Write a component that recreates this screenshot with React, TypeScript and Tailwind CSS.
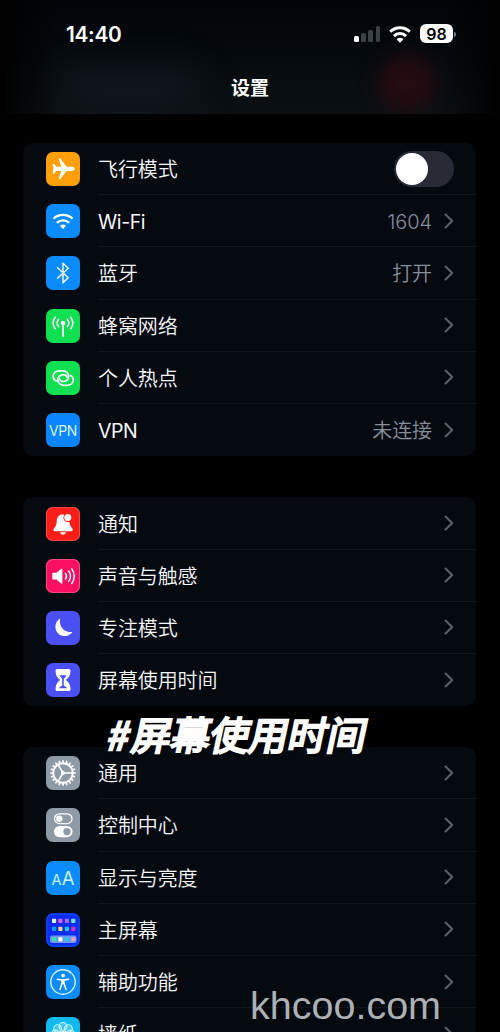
import type { ReactNode } from "react";

type Item = {
  label: string;
  icon: ReactNode;
  tile: string;
  value?: string;
  toggle?: boolean;
  latin?: boolean;
};

const gearTeeth = Array.from({ length: 20 }, (_, i) => i * 18);

function Glyph({ children }: { children: ReactNode }) {
  return (
    <svg viewBox="0 0 34 34" className="size-[34px]" fill="none" stroke="none" strokeLinecap="round" strokeLinejoin="round">
      {children}
    </svg>
  );
}

const plane = (
  <Glyph>
    <path
      d="M28.800 16.800c0-1.300-1.600-2.100-3.300-2.100h-4.800L14.700 7c-.4-.5-1-.6-2-.5l2.500 8.200h-4.800l-2.200-2.600H6.500l.9 4.700-.9 4.700h1.700l2.200-2.600h4.800l-2.500 8.200c1 .1 1.600 0 2-.5l6-7.700h4.800c1.700 0 3.300-.8 3.300-2.100z"
      fill="#fff"
    />
  </Glyph>
);

const wifi = (
  <Glyph>
    <g stroke="#fff" strokeWidth="2.2" strokeLinecap="butt">
      <path d="M7.400 14.800a13.800 13.800 0 0 1 19.200 0" />
      <path d="M10.900 18.700a8.900 8.900 0 0 1 12.200 0" />
    </g>
    <path d="M17 25l-3-3.200a4.500 4.500 0 0 1 6 0z" fill="#fff" />
  </Glyph>
);

const bluetooth = (
  <Glyph>
    <path d="M11.600 11.800l10.600 9.900-5.200 5V7.300l5.200 5-10.600 9.900" stroke="#fff" strokeWidth="1.4" />
  </Glyph>
);

const cellular = (
  <Glyph>
    <circle cx="17" cy="14" r="2.3" fill="#fff" />
    <path d="M17 15v12" stroke="#fff" strokeWidth="1.8" />
    <g stroke="#fff" strokeWidth="1.6">
      <path d="M12.600 10.400a5.700 5.700 0 0 0 0 7.200M21.400 10.400a5.700 5.700 0 0 1 0 7.200" />
      <path d="M9.200 8.300a9.600 9.600 0 0 0 0 11.400M24.800 8.300a9.600 9.600 0 0 1 0 11.400" />
    </g>
  </Glyph>
);

const hotspot = (
  <Glyph>
    <g stroke="#fff" strokeWidth="1.700">
      <path d="M10.200 19.900c-1.900-.9-3-2.500-3-4.500 0-3.100 2.500-5.500 5.800-5.500h3.800c3.300 0 5.900 2.400 5.900 5.400s-2.600 5.200-5.500 5.200c-1.900 0-3.300-1-3.700-2.500" />
      <path d="M24.300 14.300c1.900.9 3 2.500 3 4.500 0 3.100-2.500 5.500-5.800 5.500h-3.800c-3.300 0-5.900-2.400-5.900-5.400s2.600-5.200 5.500-5.200c1.900 0 3.300 1 3.700 2.500" />
    </g>
  </Glyph>
);

const bell = (
  <Glyph>
    <path
      d="M17.200 7.300c-4.300.2-6.300 2.900-6.500 6.600-.3 3.800-.7 5.200-2.500 7-1.300 1.300-.9 3.300.8 3.300h16.200c1.700 0 2.100-2 .8-3.300-1.500-1.500-2.100-2.800-2.400-5.400z"
      fill="#fff"
    />
    <path d="M14 25.300h6c-.4 1.600-1.600 2.500-3 2.500s-2.600-.9-3-2.500z" fill="#fff" />
    <circle cx="21.800" cy="10.600" r="4.400" fill="#fb1d18" />
    <circle cx="21.800" cy="10.600" r="3.500" fill="#fff" />
  </Glyph>
);

const speaker = (
  <Glyph>
    <path d="M6.300 15c0-.8.4-1.200 1.200-1.200h3l4.500-3.800c.7-.6 1.400-.3 1.400.6v13.200c0 .9-.7 1.200-1.400.6l-4.500-3.800h-3c-.8 0-1.200-.4-1.200-1.200z" fill="#fff" />
    <g stroke="#fff" strokeWidth="1.500">
      <path d="M19.500 14.400a4.700 4.700 0 0 1 0 5.600" />
      <path d="M22.600 12a8.700 8.700 0 0 1 0 10.400" />
      <path d="M25.800 9.900a12.500 12.500 0 0 1 0 14.600" />
    </g>
  </Glyph>
);

const moon = (
  <Glyph>
    <path d="M14.300 7.600a10.500 10.500 0 0 0 12.200 13.200 9.300 9.300 0 1 1-12.200-13.200z" fill="#fff" />
  </Glyph>
);

const hourglass = (
  <Glyph>
    <path
      d="M11.300 6h11.400c1.200 0 1.800.7 1.800 1.800 0 4.200-1.500 6.800-4.600 9.200 3.100 2.400 4.600 5 4.600 9.200 0 1.100-.6 1.800-1.800 1.800H11.300c-1.200 0-1.800-.7-1.800-1.800 0-4.200 1.500-6.800 4.600-9.200-3.100-2.400-4.600-5-4.600-9.200 0-1.100.6-1.800 1.800-1.800z"
      fill="#fff"
    />
    <path d="M13.300 12.300h7.400c-.7 1.300-1.700 2.400-2.900 3.400v7c1.600.5 2.700 1.300 3.300 2.500h-8.200c.6-1.200 1.700-2 3.300-2.500v-7c-1.200-1-2.200-2.100-2.900-3.400z" fill="#4b50f5" />
  </Glyph>
);

const gear = (
  <Glyph>
    <circle cx="17" cy="17" r="9.700" stroke="#fff" strokeWidth="1.900" />
    {gearTeeth.map((deg) => (
      <path key={deg} d="M17 6.400V4.900" stroke="#fff" strokeWidth="1.700" transform={`rotate(${deg} 17 17)`} />
    ))}
    <circle cx="17" cy="17" r="1.900" fill="#fff" />
    <path d="M17 17h9M17 17l-4.700-8M17 17l-4.700 8" stroke="#fff" strokeWidth="1.500" />
  </Glyph>
);

const switches = (
  <Glyph>
    <rect x="8.500" y="5.800" width="17.500" height="9.800" rx="4.900" stroke="#fff" strokeWidth="1.300" />
    <circle cx="13.300" cy="10.700" r="3.200" fill="#fff" />
    <rect x="7.900" y="18" width="18.700" height="11.200" rx="5.600" fill="#fff" />
    <circle cx="21" cy="23.600" r="3.700" fill="#8e9aa6" />
  </Glyph>
);

const homeDots = [
  { x: 6, y: 5.8, c: "#e3f4ff" },
  { x: 12.3, y: 5.8, c: "#e85ae0" },
  { x: 18.8, y: 5.8, c: "#a86cf2" },
  { x: 25.2, y: 5.8, c: "#6fe3c4" },
  { x: 6, y: 13.8, c: "#1797f5" },
  { x: 12.3, y: 13.8, c: "#e8d27c" },
  { x: 18.8, y: 13.8, c: "#2cc4ee" },
  { x: 25.2, y: 13.8, c: "#cf38b8" },
  { x: 6, y: 24.2, c: "#35e6a8" },
  { x: 12.3, y: 24.2, c: "#f2fbff" },
  { x: 18.8, y: 24.2, c: "#22c8f0" },
  { x: 25.2, y: 24.2, c: "#e8a1ac" },
];

const homeScreen = (
  <Glyph>
    <rect x="1" y="1" width="32" height="32" rx="6.500" stroke="#0a46ee" strokeWidth="1.500" />
    <rect x="4" y="22.500" width="26.500" height="7.400" rx="2" fill="#6f95f5" />
    {homeDots.map((dot) => (
      <rect key={`${dot.x}-${dot.y}`} x={dot.x} y={dot.y} width="4.200" height="4.200" rx=".8" fill={dot.c} />
    ))}
  </Glyph>
);

const accessibility = (
  <Glyph>
    <circle cx="17" cy="17" r="12.200" stroke="#d8f4ff" strokeWidth="1.400" />
    <circle cx="17" cy="10.600" r="1.900" fill="#fff" />
    <path d="M11.500 14.200l4 .9h3l4-.9" stroke="#fff" strokeWidth="1.500" />
    <path d="M15.400 14.500h3.200v4.800h-3.200z" fill="#fff" />
    <path d="M15.900 18.500l-1.900 6M18.100 18.500l1.900 6" stroke="#fff" strokeWidth="1.500" />
  </Glyph>
);

const wallpaper = (
  <Glyph>
    <g stroke="#c9f6ff" strokeWidth="1.100" fill="#fff" fillOpacity=".2">
      {[0, 45, 90, 135, 180, 225, 270, 315].map((deg) => (
        <circle key={deg} cx="17" cy="9.400" r="3.900" transform={`rotate(${deg} 17 17)`} />
      ))}
    </g>
    <circle cx="17" cy="17" r="3" fill="#fff" />
  </Glyph>
);

const groups: { margin: string; items: Item[] }[] = [
  {
    margin: "mt-[29px]",
    items: [
      { label: "飞行模式", icon: plane, tile: "bg-[#ff9f0a]", toggle: true },
      { label: "Wi-Fi", icon: wifi, tile: "bg-[#0a8bff]", value: "1604", latin: true },
      { label: "蓝牙", icon: bluetooth, tile: "bg-[#0a8bff]", value: "打开" },
      { label: "蜂窝网络", icon: cellular, tile: "bg-[#0fdf50]" },
      { label: "个人热点", icon: hotspot, tile: "bg-[#0fdf50]" },
      {
        label: "VPN",
        icon: <span className="text-[14px] tracking-[-0.4px] text-[#d5f0ff]">VPN</span>,
        tile: "bg-[#0a84ff]",
        value: "未连接",
        latin: true,
      },
    ],
  },
  {
    margin: "mt-[41.3px]",
    items: [
      { label: "通知", icon: bell, tile: "bg-[#fb1d18] ring-1 ring-inset ring-[#ff4a46]" },
      { label: "声音与触感", icon: speaker, tile: "bg-[#fb0f63] ring-1 ring-inset ring-[#ff4a86]" },
      { label: "专注模式", icon: moon, tile: "bg-[#4b50f5]" },
      { label: "屏幕使用时间", icon: hourglass, tile: "bg-[#4b50f5]" },
    ],
  },
  {
    margin: "mt-[41px]",
    items: [
      { label: "通用", icon: gear, tile: "bg-[#8e9aa6]" },
      { label: "控制中心", icon: switches, tile: "bg-[#8e9aa6]" },
      {
        label: "显示与亮度",
        icon: (
          <span className="flex items-baseline pt-0.5 leading-none text-[#c8f6ff]">
            <span className="text-[14.500px]">A</span>
            <span className="text-[18.500px]">A</span>
          </span>
        ),
        tile: "bg-[#0a8bff]",
      },
      { label: "主屏幕", icon: homeScreen, tile: "bg-[#0a2cf0]" },
      { label: "辅助功能", icon: accessibility, tile: "bg-[#0a8bff]" },
      { label: "墙纸", icon: wallpaper, tile: "bg-[#10b9ee]" },
    ],
  },
];

function Chevron() {
  return (
    <svg viewBox="0 0 10 16" className="ml-3 h-4 w-2.5" fill="none">
      <path d="M1.500 1.500L8.200 8l-6.700 6.500" stroke="#5c626b" strokeWidth="2" strokeLinecap="round" strokeLinejoin="round" />
    </svg>
  );
}

function Row({ item, last }: { item: Item; last: boolean }) {
  return (
    <div className="flex h-[52.2px] items-stretch pl-[23px]">
      <div className="flex items-center">
        <div className={`flex size-[34px] items-center justify-center overflow-hidden rounded-[7px] ${item.tile}`}>
          {item.icon}
        </div>
      </div>
      <div
        className={`ml-[18px] flex flex-1 items-center border-b pr-[22px] ${last ? "border-transparent" : "border-[#12171e]"}`}
      >
        <span
          className={`flex-1 leading-6 text-[#f6f8fa] ${item.latin ? "pt-[3px] text-[19.500px] tracking-[-0.4px]" : "pt-[3px] text-[20px] font-[350] tracking-[-0.1px]"}`}
        >
          {item.label}
        </span>
        {item.value && (
          <span className="pt-[3px] text-[20px] leading-6 font-[350] tracking-[-0.1px] text-[#858f9b]">{item.value}</span>
        )}
        {item.toggle ? (
          <div className="mt-px flex h-9 w-[60px] items-center rounded-full bg-[#282a35] p-0.5">
            <div className="size-8 rounded-full bg-white" />
          </div>
        ) : (
          <Chevron />
        )}
      </div>
    </div>
  );
}

function StatusBar() {
  return (
    <div className="flex h-[68px] items-center justify-between pr-11 pl-[66px]">
      <span className="pt-px text-[20.800px] font-semibold tracking-[-0.3px]">14:40</span>
      <div className="flex items-center">
        <div className="flex h-4 items-end gap-[2.600px]">
          <div className="h-[6px] w-[4.500px] rounded-[1.500px] bg-white" />
          <div className="h-[9px] w-[4.500px] rounded-[1.500px] bg-[#3b4044]" />
          <div className="h-[12px] w-[4.500px] rounded-[1.500px] bg-[#3b4044]" />
          <div className="h-[16px] w-[4.500px] rounded-[1.500px] bg-[#3b4044]" />
        </div>
        <svg viewBox="0 0 22 17" className="ml-[9px] h-[17px] w-[22px]" fill="none" stroke="#fff" strokeWidth="3">
          <path d="M1.200 5.800a14 14 0 0 1 19.600 0" />
          <path d="M4.900 10.100a8.700 8.700 0 0 1 12.200 0" />
          <path d="M11 16.700l-3.400-3.500a4.900 4.900 0 0 1 6.800 0z" fill="#fff" stroke="none" />
        </svg>
        <div className="-mt-px ml-[9px] flex h-[18.500px] w-[33px] items-center justify-center rounded-[6px] bg-white text-[16px] font-semibold text-black">
          98
        </div>
        <div className="ml-px h-[5px] w-[2px] rounded-r-full bg-[#777b7e]" />
      </div>
    </div>
  );
}

export default function App() {
  return (
    <div className="relative h-[1032px] w-[500px] overflow-hidden bg-black font-['Inter','Noto_Sans_CJK_SC',sans-serif] text-white">
      <header className="relative h-[114px] overflow-hidden bg-linear-to-b from-[#020508] to-[#0c1013]">
        {/* colours bleeding through the frosted bar */}
        <div className="absolute top-[66px] left-[60px] h-[44px] w-[140px] rounded-full bg-[#12171e] blur-lg" />
        <div className="absolute top-[54px] left-[378px] h-[58px] w-[58px] rounded-full bg-[#240c11] blur-[9px]" />
        <div className="absolute inset-y-0 left-0 w-14 bg-linear-to-r from-black to-transparent" />
        <div className="absolute inset-y-0 right-0 w-14 bg-linear-to-l from-black to-transparent" />
        <div className="relative">
          <StatusBar />
          <h1 className="pt-px text-center text-[19px] leading-10 font-bold">设置</h1>
        </div>
      </header>

      {groups.map((group, i) => (
        <section key={i} className={`mr-6 ml-[23px] rounded-[10px] bg-[#050910] ${group.margin}`}>
          {group.items.map((item, j) => (
            <Row key={item.label} item={item} last={j === group.items.length - 1} />
          ))}
        </section>
      ))}

      <div className="absolute top-[708px] left-[109px] -skew-x-12 font-['Noto_Sans_CJK_SC',sans-serif] text-[39px] leading-[50px] font-normal whitespace-nowrap [-webkit-text-stroke:2.400px_white] [text-shadow:1px_2px_3px_#000]">
        <span className="mr-[3px]">#</span>屏幕使用时间
      </div>
      <div className="absolute top-[981px] left-[250px] font-['Liberation_Sans',sans-serif] text-[39.500px] leading-[48px] text-[#b9bcbf]/95">
        khcoo.com
      </div>
    </div>
  );
}
